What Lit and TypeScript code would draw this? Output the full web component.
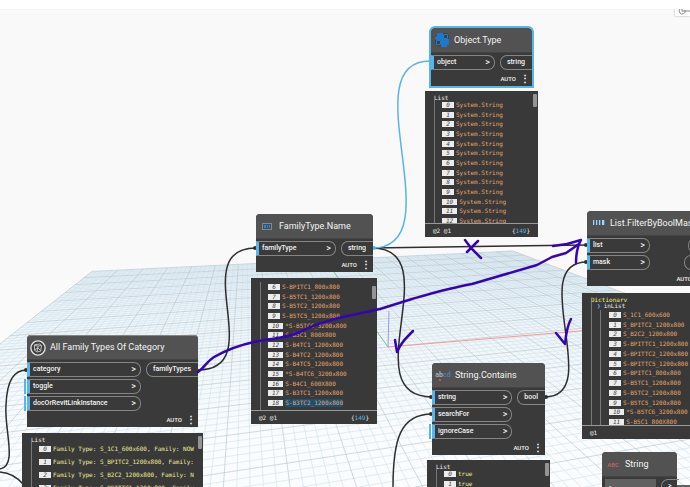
import { LitElement, html, svg, css, nothing } from "lit";
import { customElement, property } from "lit/decorators.js";
import { classMap } from "lit/directives/class-map.js";

interface Port { label: string; optional?: boolean }
interface Row { index: number; text: string; selected?: boolean }

const strings = (first: number, texts: string[], selected = -1): Row[] =>
  texts.map((text, i) => ({ index: first + i, text, selected: first + i === selected }));

const icons: Record<string, unknown> = {
  object: html`<svg width="16" height="16" viewBox="0 0 16 16">
    <path d="M3 1h6v6H1V5h2zM9 7h6v6h-2v2H7V9h2z" fill="#1c78cc"/><path d="M1 8h6v6H3v-2H1zM9 1h5v2h1v4H9z" fill="#3d4248"/>
    <path d="M2.500 8.500h4v4h-4zM9.500 2.500h4v4h-4z" fill="none" stroke="#2a78bd"/><path d="M7 7h4v4H7zM2 5h5v3H2z" fill="#1c78cc"/></svg>`,
  family: html`<svg width="16" height="16" viewBox="0 0 16 16">
    <rect x="3.500" y="5.500" width="9" height="6" fill="#3f4d5c" stroke="#7e8a95"/>
    <path d="M5 7h2v3H5zM8 7h1v3H8zM10 7h1v3h-1z" fill="#2f86d6"/></svg>`,
  list: html`<svg width="16" height="16" viewBox="0 0 16 16">
    <path d="M3 5h2v5H3zM6 5h2v5H6zM9 5h2v5H9zM12 5h3v5h-3z" fill="#b9cfe0"/>
    <path d="M4 5h1v5H4zM7 5h1v5H7zM10 5h1v5h-1zM14 5h1v5h-1z" fill="#3b82bf"/></svg>`,
  category: html`<svg width="18" height="18" viewBox="0 0 18 18">
    <circle cx="9" cy="9" r="8" fill="#3e3e3e" stroke="#e2e2e2" stroke-width="1.500"/>
    <path d="M5 5.500l6-1 2 2-1 6-4 1-3-2zM5 6l4 1 4-1M9 7l-1 6M5 11l4-2 3 3" fill="none" stroke="#cfcfcf"/></svg>`,
  contains: html`<span class="abcd">a<b>b</b><i>cd</i></span>`,
  text: html`<span class="abc">ABC</span>`,
};

@customElement("graph-node")
class GraphNode extends LitElement {
  @property() name = "";
  @property() icon = "";
  @property({ attribute: false }) inputs: Port[] = [];
  @property({ attribute: false }) outputs: string[] = [];
  @property({ type: Boolean }) chosen = false;
  @property({ type: Boolean }) custom = false;
  @property({ type: Boolean }) editor = false;

  static styles = css`
    :host { display: block; font: 500 7px/13px Roboto, sans-serif; color: #f4f4f4; }
    .node { position: relative; background: #3a3a3a; border-radius: 4px 4px 0 0; }
    .chosen { outline: 2px solid #5ab4e6; }
    .custom::before { content: ""; position: absolute; z-index: -1; left: 4px; right: 4px; top: -3px; height: 6px; background: #4a4a4a; border-radius: 4px 4px 0 0; }
    .custom header { border-top: 1px solid #858585; }
    header { display: flex; align-items: center; gap: 4px; height: 25px; box-sizing: border-box; padding-left: 3px; background: #525252; border-radius: 4px 4px 0 0; border-bottom: 1px solid #444; }
    .icon { flex: none; width: 16px; display: flex; justify-content: center; }
    h2 { margin: 0; font-size: 9px; font-weight: 400; white-space: nowrap; }
    .ports { display: flex; justify-content: space-between; gap: 5px; padding-top: 2px; }
    .ins, .outs { display: flex; flex-direction: column; gap: 2px; }
    .ins { flex: 1; max-width: var(--ins-width, none); }
    .outs { align-items: flex-end; }
    button { font: inherit; color: inherit; background: none; height: 15px; padding: 0; box-sizing: border-box; white-space: nowrap; display: flex; align-items: center; }
    .in { position: relative; justify-content: space-between; padding: 0 4px 0 3px; border: 1px solid #858585; border-left: 3px solid #5ab4e6; border-radius: 0 7px 7px 0; }
    .arrow { font-size: 9px; }
    .optional::before { content: ""; position: absolute; left: -6px; top: -1px; height: 15px; width: 2px; background: #5ab4e6; }
    .out { padding: 0 7px 0 6px; border: 1px solid #858585; border-right: 0; border-radius: 7px 0 0 7px; }
    footer { height: 16px; display: flex; justify-content: flex-end; align-items: center; gap: 7px; padding-right: 5px; font-size: 6px; }
    .more { border: 0; width: 4px; justify-content: center; font-size: 10px; font-weight: 700; }
    .abcd { font-size: 7px; color: #a9b4be; line-height: 8px; position: relative; }
    .abcd::after { content: ""; position: absolute; left: 4px; bottom: -2px; width: 2px; height: 2px; background: #d8503e; }
    .abcd i { color: #4d86b5; font-style: normal; }
    .abc { font-size: 6px; color: #c4665c; }
    input { width: 51px; height: 15px; box-sizing: border-box; margin-left: 3px; padding: 0 4px; border: 0; background: #616161; color: #ddd; font: inherit; }
  `;

  render() {
    return html`<section class=${classMap({ node: true, chosen: this.chosen, custom: this.custom })}>
      <header><span class="icon">${icons[this.icon]}</span><h2>${this.name}</h2></header>
      <div class="ports">
        ${this.editor ? html`<input aria-label="Value" value="-" />` : nothing}
        ${this.inputs.length ? html`<div class="ins">${this.inputs.map((p) => html`
          <button class=${classMap({ in: true, optional: !!p.optional })}><span>${p.label}</span><span class="arrow">&gt;</span></button>`)}</div>` : nothing}
        <div class="outs">${this.outputs.map((o) => html`<button class="out">${o}</button>`)}</div>
      </div>
      ${this.editor ? nothing : html`<footer><span>AUTO</span><button class="more" aria-label="Node menu">⋮</button></footer>`}
    </section>`;
  }
}

@customElement("value-panel")
class ValuePanel extends LitElement {
  @property() kind = "List";
  @property() tone = "string";
  @property() levels = "";
  @property() count = "";
  @property({ type: Boolean }) nested = false;
  @property({ type: Boolean }) scrolled = false;
  @property({ attribute: false }) rows: Row[] = [];

  static styles = css`
    :host { display: flex; flex-direction: column; box-sizing: border-box; overflow: hidden; background: #393939; color: #f0f0f0; font: 6px/8px "DejaVu Sans Mono", monospace; }
    .view { flex: 1; min-height: 0; overflow: hidden; padding: 3px 7px 0 9px; display: flex; flex-direction: column; }
    .kind { flex: none; height: 6px; }
    .dict { color: #f0ec90; }
    .key { position: relative; height: 8px; display: flex; gap: 3px; margin-left: 5px; background: #393939; }
    .key b { color: #5ab4e6; }
    .tree { flex: 1; border-left: 1px solid #777; min-height: 0; overflow: hidden; }
    .nested .tree { box-shadow: inset 8px 0 #393939, inset 9px 0 #777; }
    ol { list-style: none; margin: 0; padding: 0 0 0 7px; display: grid; grid-auto-rows: 1fr; height: 126px; white-space: pre; }
    .nested ol { padding-left: 17px; height: 117px; }
    .wide ol { height: 52px; }
    .short ol { height: 20px; }
    li { display: flex; align-items: center; gap: 2px; overflow: hidden; }
    .index { flex: none; min-width: 12px; box-sizing: border-box; padding: 0 4px; background: #ececec; color: #444; font-style: italic; line-height: 6px; height: 6px; text-align: center; }
    .string { color: #e5a56c; }
    .element, .bool { color: #f0ec90; }
    .selected { background: #1d4f70; }
    .scrolled { padding-top: 4px; }
    .thumb { position: absolute; right: 1px; top: 3px; width: 4px; height: 13px; border-radius: 1px; background: #949494; }
    .scrolled + .thumb { top: 8px; }
    footer { flex: none; height: 14px; box-sizing: border-box; border-top: 1px solid #999; display: flex; align-items: center; justify-content: space-between; padding: 0 8px; }
    footer b { font-weight: 400; color: #5ab4e6; }
  `;

  render() {
    return html`
      <div class=${classMap({ view: true, nested: this.nested, scrolled: this.scrolled, wide: this.tone === "element", short: this.tone === "bool" })}>
        ${this.scrolled ? nothing : html`<div class=${classMap({ kind: true, dict: this.nested })}>${this.kind}</div>`}
        <div class="tree">
          ${this.nested ? html`<div class="key"><b>❯</b><span>inList</span></div>` : nothing}
          <ol>${this.rows.map((r) => html`<li><span class="index">${r.index}</span><span class=${classMap({ [this.tone]: true, selected: !!r.selected })}>${r.text}</span></li>`)}</ol>
        </div>
      </div>
      ${this.nested ? nothing : html`<span class="thumb"></span>`}
      ${this.levels ? html`<footer><span>${this.levels}</span>${this.count ? html`<span>{<b>${this.count}</b>}</span>` : nothing}</footer>` : nothing}`;
  }
}

/* Ground plane in perspective: u runs along the red axis, v along the green one. */
const project = (u: number, v: number) => {
  const a = 0.194 * u;
  const b = 0.79 * v;
  const w = 1 + a + b;
  return `${((388 + a * 2245 + b * 246) / w).toFixed(1)} ${((347 + a * 167 + b * 150) / w).toFixed(1)}`;
};
const gridPath = (major: boolean) => {
  let d = "";
  for (let i = 0; i <= 100; i++) {
    if ((i % 5 === 0) !== major) continue;
    const t = i / 50 - 1;
    d += `M${project(t, -1)}L${project(t, 1)}M${project(-1, t)}L${project(1, t)}`;
  }
  return d;
};

@customElement("app-root")
class AppRoot extends LitElement {
  static styles = css`
    :host { display: block; height: 100vh; }
    .workspace { position: relative; height: 100%; overflow: hidden; background: linear-gradient(#f9f9f9 50%, #fdfdfd); isolation: isolate; }
    .strip { height: 9px; background: #fff; border-bottom: 1px solid #f4f4f4; }
    .scene { position: absolute; inset: 0; width: 100%; height: 100%; pointer-events: none; }
    graph-node, value-panel { position: absolute; }
    .tool { position: absolute; top: 9px; right: 0; width: 15px; height: 7px; padding: 0; overflow: hidden; background: #fff; border: 0; box-shadow: 0 0 2px #999; clip-path: inset(0 0 -3px -3px); display: flex; }
    .n1 { left: 431px; top: 28px; width: 101px; } .p1 { left: 425px; top: 91px; width: 113px; height: 146px; }
    .n2 { left: 256px; top: 214px; width: 117px; } .p2 { left: 251px; top: 278px; width: 126px; height: 146px; }
    .n3 { left: 27px; top: 335px; width: 171px; } .p3 { left: 22px; top: 433px; width: 181px; height: 61px; }
    .n4 { left: 432px; top: 363px; width: 113px; } .p4 { left: 427px; top: 460px; width: 123px; height: 34px; }
    .n5 { left: 587px; top: 211px; width: 121px; --ins-width: 63px; } .p5 { left: 582px; top: 293px; width: 132px; height: 146px; }
    .n6 { left: 602px; top: 452px; width: 75px; }
  `;

  render() {
    return html`<main class="workspace">
      <div class="strip"></div>
      <svg class="scene" aria-hidden="true">
        <defs><linearGradient id="haze" gradientUnits="userSpaceOnUse" x1="0" y1="250" x2="0" y2="440">
          <stop offset="0" stop-color="#e8f1f6"/><stop offset="1" stop-color="#fafcfd"/></linearGradient></defs>
        ${svg`<path d="M${project(-1, 1)}L${project(1, 1)}L${project(1, -0.9)}L${project(-1, -0.9)}Z" fill="url(#haze)"/>
        <path d=${gridPath(false)} stroke="#cfe1ec" stroke-width="0.600" fill="none"/>
        <path d=${gridPath(true)} stroke="#b4c3ca" stroke-width="0.600" fill="none"/>`}
        <path d="M388 347L700 321" stroke="#f59a96"/><path d="M388 347L326 261" stroke="#8cc49a"/><path d="M388 347L389 311" stroke="#9a9af0"/>
        <g fill="none" stroke="#2e2e2e" stroke-width="1.500">
          <path d="M372 248L587 245"/>
          <path d="M372 248C450 248 352 397 432 397"/>
          <path d="M198 370C270 370 185 248 256 248"/>
          <path d="M545 397C605 397 525 262 587 262"/>
          <path d="M393 487C393 440 400 414 432 414"/>
          <path d="M0 469C18 466 4 430 6 405C7 380 14 370 27 370"/>
          <path d="M0 472Q14 473 24 485"/><path d="M677 486H690"/>
          <path d="M372 248C455 248 350 61 430 61" stroke="#5ab4e6"/>
        </g>
        <g fill="#2e2e2e"><circle cx="26" cy="370" r="2"/><circle cx="255" cy="248" r="2"/><circle cx="431" cy="397" r="2"/><circle cx="431" cy="414" r="2"/><circle cx="546" cy="397" r="2"/><circle cx="586" cy="245" r="2"/><circle cx="586" cy="262" r="2"/><circle cx="374" cy="248" r="2" fill="#5ab4e6"/></g>
      </svg>

      <graph-node class="n1" chosen name="Object.Type" icon="object" .inputs=${[{ label: "object" }]} .outputs=${["string"]}></graph-node>
      <value-panel class="p1" levels="@2 @1" count="149" .rows=${strings(0, Array(13).fill("System.String"))}></value-panel>

      <graph-node class="n2" name="FamilyType.Name" icon="family" .inputs=${[{ label: "familyType" }]} .outputs=${["string"]}></graph-node>
      <value-panel class="p2" scrolled levels="@2 @1" count="149" .rows=${strings(6, ["S-BPITC1_800x800", "S-B5TC1_1200x800", "S-B5TC2_1200x800", "S-B5TC5_1200x800", "*S-B5TC6_3200x800", "S-B5C1_800X800", "S-B4TC1_1200x800", "S-B4TC2_1200x800", "S-B4TC5_1200x800", "*S-B4TC6_3200x800", "S-B4C1_600X800", "S-B3TC1_1200x800", "S-B3TC2_1200x800"], 18)}></value-panel>

      <graph-node class="n3" custom name="All Family Types Of Category" icon="category"
        .inputs=${[{ label: "category" }, { label: "toggle", optional: true }, { label: "docOrRevitLinkInstance", optional: true }]} .outputs=${["familyTypes"]}></graph-node>
      <value-panel class="p3" tone="element" .rows=${strings(0, ["Family Type: S_1C1_600x600, Family: NOW", "Family Type: S_BPITC2_1200x800, Family:", "Family Type: S_B2C2_1200x800, Family: N", "Family Type: S-BPITTC1_1200x800, Family"])}></value-panel>

      <graph-node class="n4" name="String.Contains" icon="contains"
        .inputs=${[{ label: "string" }, { label: "searchFor" }, { label: "ignoreCase", optional: true }]} .outputs=${["bool"]}></graph-node>
      <value-panel class="p4" tone="bool" .rows=${strings(0, ["true", "true"])}></value-panel>

      <graph-node class="n5" name="List.FilterByBoolMask" icon="list" .inputs=${[{ label: "list" }, { label: "mask" }]} .outputs=${["in", "out"]}></graph-node>
      <value-panel class="p5" nested kind="Dictionary" levels="@1" .rows=${strings(0, ["S_1C1_600x600", "S_BPITC2_1200x800", "S_B2C2_1200x800", "S-BPITTC1_1200x800", "S-BPITTC2_1200x800", "S-BPITTC5_1200x800", "S-BPITC1_800x800", "S-B5TC1_1200x800", "S-B5TC2_1200x800", "S-B5TC5_1200x800", "*S-B5TC6_3200x800", "S-B5C1_800X800"])}></value-panel>

      <graph-node class="n6" editor name="String" icon="text" .outputs=${[">"]}></graph-node>

      <svg class="scene" aria-hidden="true">
        <g fill="none" stroke="#3505b5" stroke-width="2.500" stroke-linecap="round" stroke-linejoin="round">
          <path d="M198 372C205 367 206 362 214 357C228 349 240 345 254 342C270 338 285 339 300 332C325 319 350 316 380 309L412 299C440 291 450 288 472 284L537 265L552 257L566 253L579 244"/>
          <path d="M553 246L567 244L581 240C577 247 576 254 576 263"/>
          <path d="M465 240L471 248L481 258M478 241L467 252"/>
          <path d="M395 340L397 352C401 343 405 339 413 331"/>
          <path d="M556 333L565 344C566 334 567 326 571 319"/>
        </g>
      </svg>
      <button class="tool" aria-label="View"><svg width="15" height="7"><path d="M5 0a3 3 0 1 0 5 1M7 0v2h8" fill="none" stroke="#888"/></svg></button>
    </main>`;
  }
}
